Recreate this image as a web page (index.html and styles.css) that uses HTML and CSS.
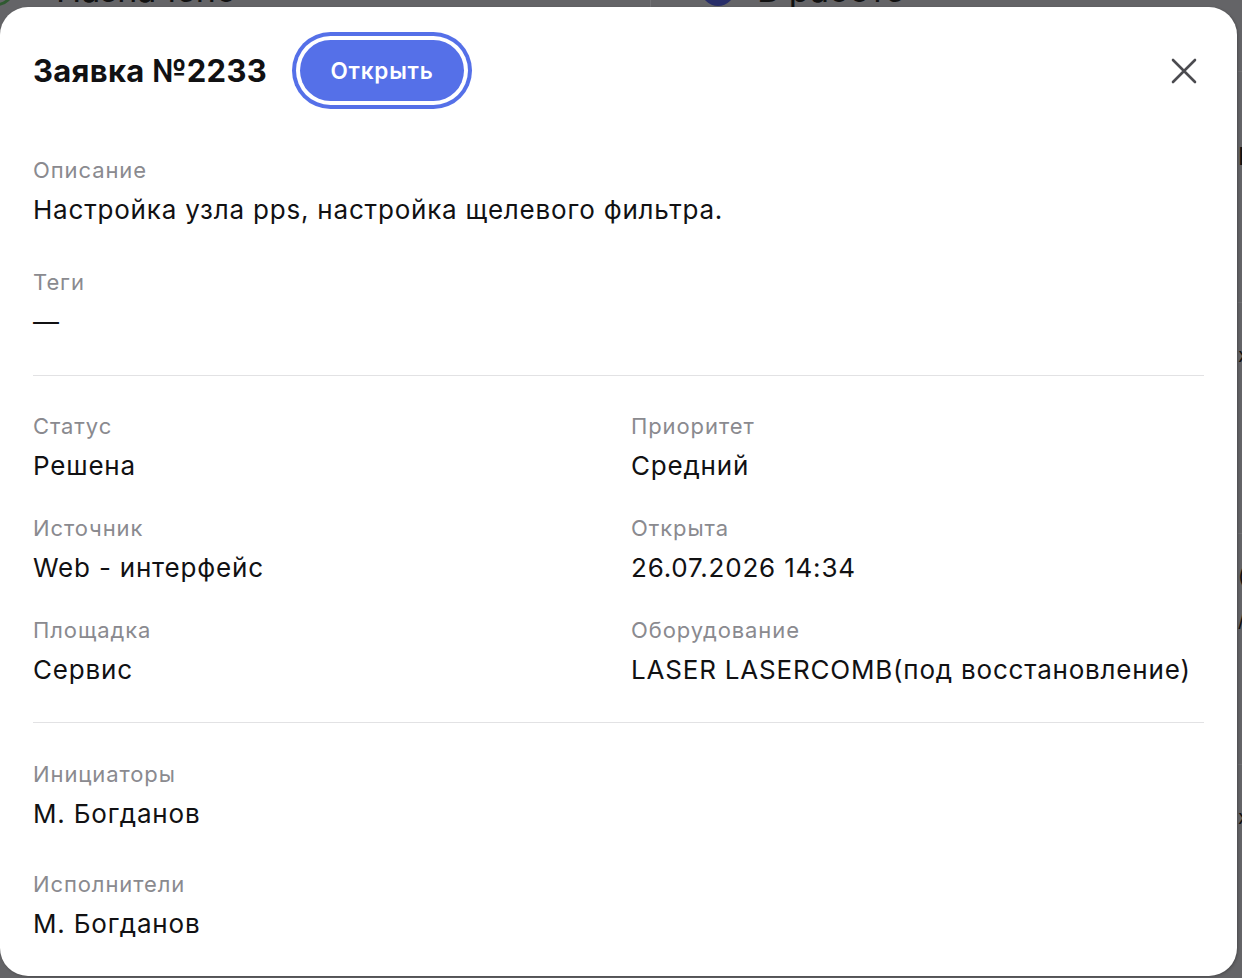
FILE: index.html
```html
<!DOCTYPE html>
<html lang="ru">
<head>
    <meta charset="UTF-8">
    <meta name="viewport" content="width=device-width, initial-scale=1.0">
    <title>Заявка №2233</title>
    <link rel="stylesheet" href="styles.css">
</head>
<body>
    <!-- board behind the dialog -->
    <div class="board">
        <div class="board-head">
            <div class="board-col">
                <span class="dot dot-assigned"></span>
                <span class="col-title">Назначено</span>
                <span class="col-count">2</span>
            </div>
            <div class="board-col">
                <span class="dot dot-progress"></span>
                <span class="col-title">В работе</span>
            </div>
        </div>
        <div class="board-side">
            <div class="side-card"><span class="side-a">L</span></div>
            <div class="side-card"><span class="side-b">x</span></div>
            <div class="side-card"><span class="side-c">(</span><span class="side-d">/</span></div>
            <div class="side-card"><span class="side-b">x</span></div>
        </div>
    </div>

    <div class="modal">
        <div class="modal-head">
            <h2 class="modal-title">Заявка №2233</h2>
            <button class="btn-open">Открыть</button>
            <button class="btn-close" aria-label="Закрыть">
                <svg width="26" height="26" viewBox="0 0 26 26">
                    <path d="M2 2L24 24M24 2L2 24" stroke="#4b4b50" stroke-width="2.6" stroke-linecap="round"/>
                </svg>
            </button>
        </div>

        <div class="section section-top">
            <div class="field">
                <div class="label">Описание</div>
                <div class="value">Настройка узла pps, настройка щелевого фильтра.</div>
            </div>
            <div class="field">
                <div class="label">Теги</div>
                <div class="value">—</div>
            </div>
        </div>

        <div class="section section-grid">
            <div class="field">
                <div class="label">Статус</div>
                <div class="value">Решена</div>
            </div>
            <div class="field">
                <div class="label">Приоритет</div>
                <div class="value">Средний</div>
            </div>
            <div class="field">
                <div class="label">Источник</div>
                <div class="value">Web - интерфейс</div>
            </div>
            <div class="field">
                <div class="label">Открыта</div>
                <div class="value">26.07.2026 14:34</div>
            </div>
            <div class="field">
                <div class="label">Площадка</div>
                <div class="value">Сервис</div>
            </div>
            <div class="field">
                <div class="label">Оборудование</div>
                <div class="value">LASER LASERCOMB(под восстановление)</div>
            </div>
        </div>

        <div class="section section-people">
            <div class="field">
                <div class="label">Инициаторы</div>
                <div class="value">М. Богданов</div>
            </div>
            <div class="field">
                <div class="label">Исполнители</div>
                <div class="value">М. Богданов</div>
            </div>
        </div>
    </div>
</body>
</html>
```

FILE: styles.css
```css
body {
    margin: 0;
    height: 978px;
    overflow: hidden;
    background-color: #646467;
    font-family: Inter, "Noto Sans", sans-serif;
    color: #111113;
}

/* dimmed board */
.board {
    position: relative;
    height: 100%;
}
.board-head {
    display: flex;
    margin-top: -29px;
    height: 36px;
}
.board-col {
    display: flex;
    align-items: center;
    gap: 42px;
}
.board-col:first-child {
    width: 670px;
    margin-left: -20px;
    border-right: 1px solid #727275;
}
.board-col:last-child {
    margin-left: 50px;
    gap: 22px;
}
.dot {
    width: 34px;
    height: 34px;
    border-radius: 50%;
    box-sizing: border-box;
}
.dot-assigned {
    border: 3px solid #2f5a30;
}
.dot-progress {
    background-color: #272d68;
}
.col-title {
    font-size: 34px;
    color: #111;
}
.col-count {
    margin-left: auto;
    margin-right: 30px;
    font-size: 20px;
    color: #3a3a3c;
}
.board-side {
    position: absolute;
    left: 1238px;
    top: 100px;
    width: 10px;
}
.side-card {
    height: 230px;
    border-top: 1px solid #6e6e71;
    font-size: 20px;
    color: #111;
}
.side-a { display: block; margin-top: 70px; font-size: 24px; }
.side-b { display: block; margin-top: 40px; }
.side-c { display: block; margin-top: 30px; }
.side-d { display: block; margin-top: 20px; }

/* dialog */
.modal {
    position: absolute;
    left: 0;
    top: 7px;
    width: 1237px;
    height: 969px;
    box-sizing: border-box;
    padding: 0 33px;
    background-color: #fff;
    border-radius: 28px;
    box-shadow: 1px 1px 3px rgba(0, 0, 0, 0.25);
}
.modal-head {
    display: flex;
    align-items: center;
    height: 75px;
    padding-top: 26px;
}
.modal-title {
    margin: 0;
    font-size: 31px;
    font-weight: 700;
    letter-spacing: 0.3px;
}
.btn-open {
    margin-left: 33px;
    width: 164px;
    height: 61px;
    border: none;
    border-radius: 31px;
    background-color: #5570e8;
    box-shadow: 0 0 0 4px #fff, 0 0 0 8px #5570e8;
    color: #fff;
    font-family: inherit;
    font-size: 22.5px;
    font-weight: 600;
    letter-spacing: 0.8px;
    cursor: pointer;
}
.btn-close {
    margin-left: auto;
    width: 40px;
    height: 40px;
    padding: 0;
    border: none;
    background: none;
    display: flex;
    align-items: center;
    justify-content: center;
    cursor: pointer;
}

.section {
    border-bottom: 1px solid #e2e2e4;
}
.section-top {
    display: flex;
    flex-direction: column;
    gap: 40px;
    padding: 48px 0 35px;
}
.section-grid {
    display: grid;
    grid-template-columns: 1fr 1fr;
    column-gap: 25px;
    row-gap: 30px;
    padding: 36px 0 34px;
}
.section-people {
    display: flex;
    flex-direction: column;
    gap: 38px;
    padding-top: 37px;
    border-bottom: none;
}
.label {
    font-size: 22px;
    line-height: 28px;
    letter-spacing: 0.9px;
    color: #8a8a8f;
    margin-bottom: 8px;
}
.value {
    font-size: 26px;
    line-height: 36px;
    letter-spacing: 0.8px;
    color: #111113;
}
```
